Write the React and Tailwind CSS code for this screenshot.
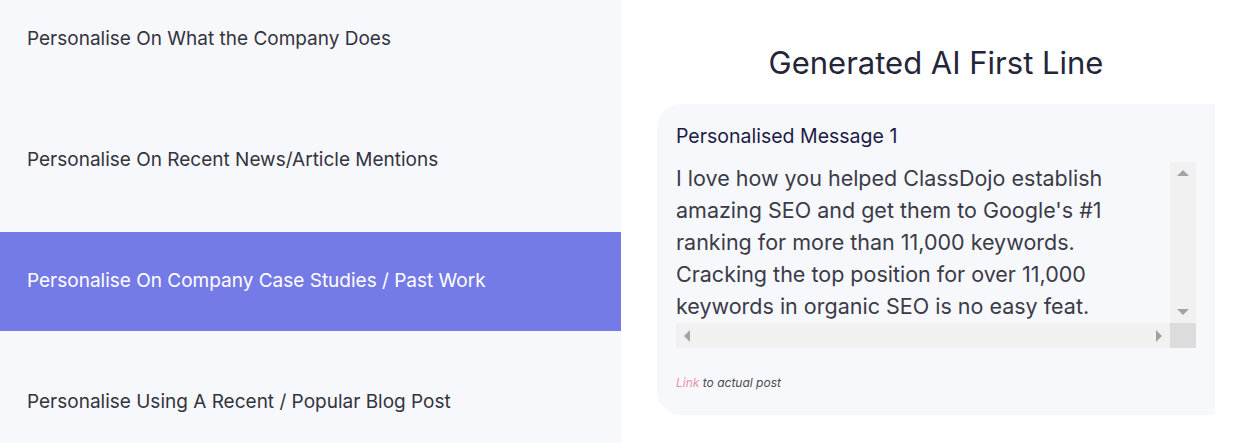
import React, { useState } from 'react';

const options = [
  'Personalise On What the Company Does',
  'Personalise On Recent News/Article Mentions',
  'Personalise On Company Case Studies / Past Work',
  'Personalise Using A Recent / Popular Blog Post',
];

const message =
  "I love how you helped ClassDojo establish amazing SEO and get them to Google's #1 ranking for more than 11,000 keywords. Cracking the top position for over 11,000 keywords in organic SEO is no easy feat.";

const App = () => {
  const [active, setActive] = useState(2);

  return (
    <div className="flex h-[443px] w-[1240px] overflow-hidden bg-white font-['Inter',sans-serif]">
      {/* left: personalisation options */}
      <div className="w-[621px] shrink-0 bg-[#f7f8fc]">
        <div className="mt-[-10px] flex flex-col gap-[22px]">
          {options.map((o, i) => (
            <button
              key={o}
              onClick={() => setActive(i)}
              className={`flex h-[99px] items-center px-[27px] text-left text-[19px] ${
                active === i ? 'bg-[#747be6] text-white' : 'text-[#333340]'
              }`}
            >
              {o}
            </button>
          ))}
        </div>
      </div>

      {/* right: generated line */}
      <div className="flex flex-1 flex-col pl-[36px] pr-[25px]">
        <h1 className="mt-[44px] text-center text-[31px] leading-[38px] text-[#25253a]">
          Generated AI First Line
        </h1>
        <div className="mt-[22px] h-[311px] rounded-l-[24px] bg-[#f7f8fc] px-[19px] pt-[20px]">
          <h2 className="text-[19.5px] leading-[24px] text-[#1c1b45]">Personalised Message 1</h2>
          <div className="mt-[14px] grid grid-cols-[1fr_26px] grid-rows-[161px_25px]">
            <div className="overflow-hidden pr-[60px] text-[21.5px] leading-[32px] text-[#3b3b48]">
              {message}
            </div>
            <div className="flex flex-col items-center justify-between bg-[#f1f1f1] py-[8px]">
              <span className="h-0 w-0 border-x-[6px] border-b-[6px] border-x-transparent border-b-[#a3a3a3]" />
              <span className="h-0 w-0 border-x-[6px] border-t-[6px] border-x-transparent border-t-[#a3a3a3]" />
            </div>
            <div className="flex items-center justify-between bg-[#f1f1f1] px-[8px]">
              <span className="h-0 w-0 border-y-[6px] border-r-[6px] border-y-transparent border-r-[#a3a3a3]" />
              <span className="h-0 w-0 border-y-[6px] border-l-[6px] border-y-transparent border-l-[#a3a3a3]" />
            </div>
            <div className="bg-[#dcdcdc]" />
          </div>
          <p className="mt-[26px] text-[12px] italic text-[#4a4a55]">
            <a href="#" className="text-[#ec8fb0]">Link</a> to actual post
          </p>
        </div>
      </div>
    </div>
  );
};

export default App;
